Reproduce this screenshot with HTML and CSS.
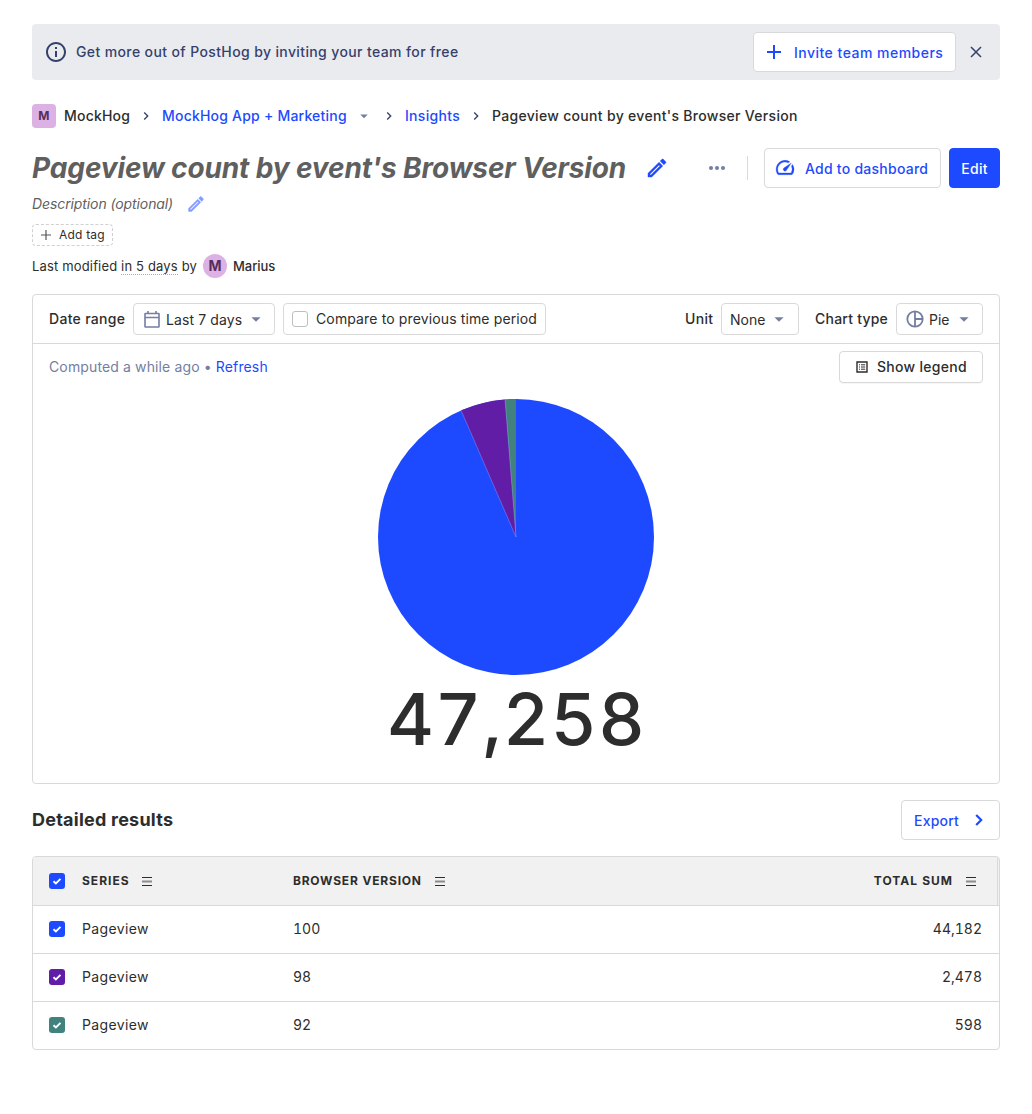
FILE: index.html
```html
<!DOCTYPE html>
<html lang="en">
<head>
<meta charset="utf-8">
<title>Pageview count by event's Browser Version</title>
<link rel="stylesheet" href="styles.css">
</head>
<body>
<svg class="defs" width="0" height="0" aria-hidden="true">
  <symbol id="caret" viewBox="0 0 24 24"><path d="M7 10l5 5 5-5z" fill="currentColor"/></symbol>
  <symbol id="chevron" viewBox="0 0 24 24"><path d="M8.59 16.59 10 18l6-6-6-6-1.41 1.41L13.17 12z" fill="currentColor"/></symbol>
  <symbol id="pencil" viewBox="0 0 24 24"><path d="M14.06 9.02l.92.92L5.92 19H5v-.92l9.06-9.06M17.66 3c-.25 0-.51.1-.7.29l-1.83 1.83 3.75 3.75 1.83-1.83c.39-.39.39-1.02 0-1.41l-2.34-2.34c-.2-.2-.45-.29-.71-.29zm-3.6 3.19L3 17.25V21h3.75L17.81 9.94l-3.75-3.75z" fill="currentColor" stroke="currentColor" stroke-width=".4"/></symbol>
  <symbol id="plus" viewBox="0 0 24 24"><path d="M19 13h-6v6h-2v-6H5v-2h6V5h2v6h6z" fill="currentColor"/></symbol>
  <symbol id="check" viewBox="0 0 16 16"><path d="M4.500 8.200l2.400 2.300 4.600-4.600" fill="none" stroke="#fff" stroke-width="1.900"/></symbol>
  <symbol id="menu" viewBox="0 0 10 9"><path d="M0 .5h10M0 8.500h10" stroke="#2d2d2d"/><path d="M0 4.500h10" stroke="#8c8c8c" stroke-width="2"/></symbol>
</svg>
<main class="scene">
  <section class="banner">
    <svg class="icon-24 info" viewBox="0 0 24 24"><path fill="currentColor" d="M11 7h2v2h-2zm0 4h2v6h-2zm1-9C6.48 2 2 6.48 2 12s4.48 10 10 10 10-4.48 10-10S17.52 2 12 2zm0 18c-4.41 0-8-3.59-8-8s3.59-8 8-8 8 3.59 8 8-3.59 8-8 8z"/></svg>
    <span class="banner-text">Get more out of PostHog by inviting your team for free</span>
    <button class="btn invite"><svg class="icon-24"><use href="#plus"/></svg><span class="t-invite">Invite team members</span></button>
    <svg class="close" viewBox="0 0 12 12"><path d="M1 1l10 10M11 1L1 11" stroke="currentColor" stroke-width="1.500"/></svg>
  </section>

  <nav class="crumbs">
    <span class="letter">M</span>
    <span class="crumb-org">MockHog</span>
    <svg class="sep"><use href="#chevron"/></svg>
    <a class="crumb-project">MockHog App + Marketing</a>
    <svg class="crumb-caret"><use href="#caret"/></svg>
    <svg class="sep"><use href="#chevron"/></svg>
    <a class="crumb-insights">Insights</a>
    <svg class="sep"><use href="#chevron"/></svg>
    <span class="t-page">Pageview count by event's Browser Version</span>
  </nav>

  <header class="title-row">
    <h1>Pageview count by event's Browser Version</h1>
    <svg class="icon-24 title-pencil"><use href="#pencil"/></svg>
    <svg class="dots" viewBox="0 0 16 4"><circle cx="2" cy="2" r="2"/><circle cx="8" cy="2" r="2"/><circle cx="14" cy="2" r="2"/></svg>
    <span class="divider"></span>
    <button class="btn dash">
      <svg viewBox="2 4 20 16"><path fill="currentColor" d="m20.380 8.570-1.230 1.850a8 8 0 0 1-.22 7.580H5.070A8 8 0 0 1 15.580 6.850l1.850-1.230A10 10 0 0 0 3.350 19a2 2 0 0 0 1.720 1h13.850a2 2 0 0 0 1.740-1 10 10 0 0 0-.27-10.440zm-9.790 6.840a2 2 0 0 0 2.830 0l5.660-8.490-8.490 5.660a2 2 0 0 0 0 2.830z" stroke="currentColor" stroke-width=".3"/></svg>
      <span class="t-dash">Add to dashboard</span>
    </button>
    <button class="btn primary">Edit</button>
  </header>

  <div class="desc"><i>Description (optional)</i><svg><use href="#pencil"/></svg></div>
  <div class="tags"><button class="tag"><svg viewBox="0 0 10 10"><path d="M5 0v10M0 5h10" stroke="#555" stroke-width="1.200"/></svg><span>Add tag</span></button></div>
  <div class="modified"><span class="t-mod">Last modified <span class="when">in 5 days</span> by</span><span class="avatar">M</span><b>Marius</b></div>

  <section class="card">
    <div class="filters">
      <span class="label">Date range</span>
      <button class="select date">
        <svg class="cal" viewBox="0 0 16 17"><path d="M1.500 2.500h13q.5 0 .5.500v12.500q0 .5-.5.500h-13q-.5 0-.5-.5V3q0-.5.5-.5zM1 6.500h14M4 0v3M12 0v3" fill="none" stroke="currentColor" stroke-width="1.600"/></svg>
        <span>Last 7 days</span><svg class="caret"><use href="#caret"/></svg>
      </button>
      <label class="select compare"><span class="box"></span><span>Compare to previous time period</span></label>
      <span class="label unit-label">Unit</span>
      <button class="select unit"><span>None</span><svg class="caret"><use href="#caret"/></svg></button>
      <span class="label type-label">Chart type</span>
      <button class="select type">
        <svg class="pie-icon" viewBox="0 0 18 18"><path d="M9 1v16M9 9h8" stroke="currentColor" stroke-width="1.800"/><circle cx="9" cy="9" r="7.700" fill="none" stroke="currentColor" stroke-width="1.800"/></svg>
        <span>Pie</span><svg class="caret"><use href="#caret"/></svg>
      </button>
    </div>
    <div class="status">
      <span class="computed">Computed a while ago • <a>Refresh</a></span>
      <button class="select legend">
        <svg viewBox="0 0 12 12"><path d="M1 1h10v10H1z" fill="none" stroke="#2d2d2d" stroke-width="1.400"/><path d="M3 3.800h1M3 6h1M3 8.200h1M5 3.800h4.200M5 6h4.200M5 8.200h4.200" stroke="#2d2d2d"/></svg>
        <span>Show legend</span>
      </button>
    </div>
    <svg class="pie" viewBox="-138 -138 276 276">
      <circle r="138" fill="#1d4aff"/>
      <path d="M0 0L-54.900 -126.600A138 138 0 0 1 -10.960 -137.560Z" fill="#621da6"/>
      <path d="M0 0L-10.960 -137.560A138 138 0 0 1 0 -138Z" fill="#42827e"/>
      <path d="M-54.900 -126.600L0 0L-10.960 -137.560" fill="none" stroke="#fff" stroke-opacity=".45" stroke-width=".5"/>
    </svg>
    <div class="total">47,258</div>
  </section>

  <div class="results-head">
    <h2>Detailed results</h2>
    <button class="btn export"><span>Export</span><svg viewBox="0 0 8 12"><path d="M1.200 1l5 5-5 5" fill="none" stroke="currentColor" stroke-width="2.200"/></svg></button>
  </div>

  <section class="table">
    <div class="row head">
      <span class="cb blue"><svg><use href="#check"/></svg></span>
      <span class="c1"><span>SERIES</span><svg class="menu"><use href="#menu"/></svg></span>
      <span class="c2"><span class="t-bv">BROWSER VERSION</span><svg class="menu"><use href="#menu"/></svg></span>
      <span class="c3"><span class="t-sum">TOTAL SUM</span><svg class="menu"><use href="#menu"/></svg></span>
    </div>
    <div class="row"><span class="cb blue"><svg><use href="#check"/></svg></span><span class="c1">Pageview</span><span class="c2">100</span><span class="c3">44,182</span></div>
    <div class="row"><span class="cb purple"><svg><use href="#check"/></svg></span><span class="c1">Pageview</span><span class="c2">98</span><span class="c3">2,478</span></div>
    <div class="row"><span class="cb green"><svg><use href="#check"/></svg></span><span class="c1">Pageview</span><span class="c2">92</span><span class="c3">598</span></div>
  </section>
</main>
</body>
</html>
```
FILE: styles.css
```css
* { box-sizing: border-box; }
body { margin: 0; background: #fff; color: #2d2d2d; font: 14px/20px Inter, sans-serif; }
.defs { display: none; }
button { font: inherit; color: inherit; padding: 0; margin: 0; background: #fff; }
svg { flex: none; display: block; }
span, a, b { white-space: nowrap; }
a { color: #1d4aff; }
.scene { padding: 24px 32px; }
.icon-24 { width: 24px; height: 24px; }

.banner { height: 56px; background: #eaebef; border-radius: 4px; display: flex; align-items: center; padding: 0 18px 0 12px; color: #35416b; font-weight: 500; }
.banner-text { margin-left: 8px; margin-right: auto; letter-spacing: .38px; }
.btn { height: 40px; border: 1px solid #d9d9d9; border-radius: 4px; color: #1d4aff; font-weight: 500; display: flex; align-items: center; padding-top: 1px; }
.invite { width: 203px; padding-left: 8px; }
.invite svg { margin-top: -2px; }
.invite span { margin-left: 8px; letter-spacing: .48px; }
.close { width: 12px; height: 12px; margin-left: 14px; }

.crumbs { height: 24px; margin-top: 24px; display: flex; align-items: center; font-weight: 500; letter-spacing: .21px; }
.letter { width: 24px; height: 24px; border-radius: 4px; background: #dcb1e3; color: #572e5e; font-weight: 700; font-size: 12px; line-height: 24px; text-align: center; margin-right: 8px; }
.crumb-org { width: 66px; }
.sep { width: 16px; height: 16px; margin: 0 8px; color: #35416b; }
.crumb-project { width: 185px; }
.crumb-caret { width: 18px; height: 18px; color: #747ea2; margin-left: 8px; }
.crumb-insights { width: 55px; letter-spacing: .3px; }
.t-page { letter-spacing: .31px; }

.title-row { height: 40px; margin-top: 20px; display: flex; align-items: center; }
h1 { margin: 0; width: 594px; font-size: 28px; line-height: 40px; font-weight: 700; font-style: italic; color: #5f5f5f; white-space: nowrap; letter-spacing: -.13px; }
.title-pencil { margin-left: 19px; color: #1d4aff; }
.dots { width: 16px; height: 4px; fill: #747ea2; margin-left: 40px; }
.divider { width: 1px; height: 24px; background: #d9d9d9; margin: 0 16px 0 22px; }
.dash { width: 177px; padding-left: 11px; letter-spacing: .25px; }
.dash svg { width: 18px; height: 15px; margin-right: 11px; margin-top: -2px; overflow: visible; }
.primary { width: 51px; margin-left: 8px; justify-content: center; background: #1d4aff; border-color: #1d4aff; color: #fff; letter-spacing: .3px; }

.desc { height: 20px; margin-top: 6px; display: flex; align-items: center; color: #5f5f5f; }
.desc i { width: 141px; white-space: nowrap; letter-spacing: -.1px; }
.desc svg { width: 20px; height: 20px; margin-left: 13px; color: #1d4aff; opacity: .55; }
.tags { margin-top: 10px; display: flex; }
.tag { width: 81px; height: 22px; border: 1px dashed #d0d0d0; border-radius: 4px; display: flex; align-items: center; padding-left: 8px; font-size: 12px; line-height: 18px; letter-spacing: .2px; }
.tag svg { width: 10px; height: 10px; margin-right: 8px; }
.modified { height: 24px; margin-top: 8px; display: flex; align-items: center; font-size: 13px; }
.modified b { font-weight: 500; letter-spacing: -.05px; }
.t-mod { width: 165px; letter-spacing: .16px; }
.when { border-bottom: 1px dotted #aaa; }
.avatar { width: 24px; height: 24px; border-radius: 50%; background: #dcb1e3; color: #572e5e; font-weight: 700; font-size: 14px; line-height: 24px; text-align: center; margin: 0 6px; }

.card { margin-top: 16px; height: 490px; border: 1px solid #d9d9d9; border-radius: 4px; }
.filters { height: 49px; border-bottom: 1px solid #d9d9d9; padding: 0 16px; display: flex; align-items: center; }
.label { font-weight: 500; letter-spacing: .3px; width: 76px; }
.select { height: 32px; border: 1px solid #d9d9d9; border-radius: 4px; display: flex; align-items: center; }
.caret { width: 22px; height: 22px; color: #747ea2; }
.date { width: 142px; margin-left: 8px; padding: 1px 0 0 10px; letter-spacing: .1px; }
.cal { width: 16px; height: 17px; color: #747ea2; margin-right: 6px; margin-top: -1px; }
.date .caret, .unit .caret, .type .caret { margin-left: 3px; margin-top: -1px; }
.compare { width: 263px; margin-left: 8px; padding-left: 8px; letter-spacing: .13px; }
.box { width: 16px; height: 16px; border: 1px solid #bfbfbf; border-radius: 3px; margin-right: 8px; }
.unit-label { margin-left: auto; width: 28px; }
.unit { width: 78px; margin-left: 8px; padding: 1px 0 0 8px; }
.type-label { margin-left: 16px; width: 73px; letter-spacing: .23px; }
.type { width: 87px; margin-left: 8px; padding: 1px 0 0 9px; }
.pie-icon { width: 18px; height: 18px; color: #747ea2; margin-right: 5px; margin-top: -1px; }
.status { height: 46px; padding: 0 16px; display: flex; align-items: center; justify-content: space-between; color: #747ea2; }
.computed { letter-spacing: .13px; }
.legend { width: 144px; color: #2d2d2d; font-weight: 500; padding-left: 16px; letter-spacing: .28px; box-shadow: 0 1px 1px #0000000a; }
.legend svg { width: 12px; height: 12px; margin-right: 9px; }
.pie { width: 276px; height: 276px; margin: 9px auto 0; }
.total { text-align: center; font-size: 72px; line-height: 88px; font-weight: 480; font-variant-numeric: tabular-nums; letter-spacing: 1px; padding-left: 1px; }

.results-head { height: 40px; margin-top: 16px; display: flex; align-items: center; justify-content: space-between; }
h2 { margin: 0; font-size: 18px; line-height: 28px; font-weight: 700; letter-spacing: .23px; }
.export { width: 99px; padding-left: 12px; }
.export span { width: 45px; letter-spacing: .2px; }
.export svg { width: 8px; height: 12px; margin-left: 16px; margin-top: -2px; }

.table { margin-top: 16px; border: 1px solid #d9d9d9; border-radius: 4px; overflow: hidden; }
.row { height: 48px; display: flex; align-items: center; padding: 0 17px 1px 16px; border-top: 1px solid #d9d9d9; font-variant-numeric: tabular-nums; }
.head { padding-bottom: 0; border-top: 0; background: #f1f1f1; font-size: 12px; font-weight: 700; box-shadow: inset -1px 0 #f1f1f1, inset -2px 0 #d9d9d9; letter-spacing: .77px; }
.cb { width: 16px; height: 16px; border-radius: 3px; margin-right: 17px; }
.cb svg { width: 16px; height: 16px; }
.blue { background: #1d4aff; }
.purple { background: #621da6; }
.green { background: #42827e; }
.c1 { width: 211px; letter-spacing: .35px; }
.head .c1 { letter-spacing: 1px; }
.c3 { margin-left: auto; }
.head .c3 { letter-spacing: 1px; padding-right: 6px; }
.head .c1, .head .c2, .head .c3 { display: flex; align-items: center; }
.menu { width: 10px; height: 9px; margin-left: 13px; position: relative; top: .5px; }
.head .c1 .menu { margin-left: 12px; }
```
